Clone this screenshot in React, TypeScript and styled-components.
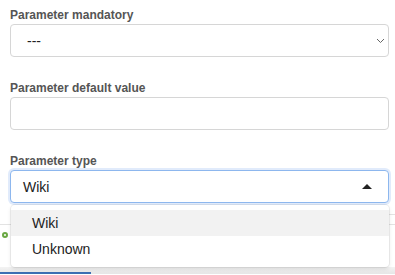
import React from "react";
import styled, { createGlobalStyle } from "styled-components";

const Global = createGlobalStyle`
  html, body { margin: 0; padding: 0; background: #fff; overflow: hidden; }
  body { font-family: "Liberation Sans", Arial, sans-serif; width: 395px; height: 275px; }
`;

const Page = styled.div`
  width: 395px;
  height: 275px;
  display: flex;
  flex-direction: column;
`;

const Form = styled.div`
  padding: 8px 6px 0 10px;
  display: flex;
  flex-direction: column;
  gap: 24px;
`;

const Group = styled.div<{ $raised?: boolean }>`
  display: flex;
  flex-direction: column;
  position: relative;
  z-index: ${(p) => (p.$raised ? 2 : "auto")};
`;

const Label = styled.div`
  font-size: 12px;
  line-height: 14px;
  font-weight: bold;
  color: #555;
  margin-bottom: 2px;
`;

const Field = styled.div<{ $focused?: boolean; $pad?: number }>`
  box-sizing: border-box;
  height: 33px;
  border: 1px solid ${(p) => (p.$focused ? "#8db7ee" : "#d6d6d6")};
  border-radius: 4px;
  box-shadow: ${(p) => (p.$focused ? "0 0 0 2px rgba(120,165,235,0.22)" : "none")};
  display: flex;
  align-items: center;
  justify-content: space-between;
  padding: 0 ${(p) => (p.$focused ? 16 : 3)}px 0 ${(p) => p.$pad ?? 12}px;
  font-size: 14px;
  color: #222;
  background: #fff;
`;

const Value = styled.span`
  font-size: 14px;
  line-height: 16px;
  color: #222;
`;

const Menu = styled.div`
  position: absolute;
  top: 51px;
  left: 1px;
  right: 0;
  box-sizing: border-box;
  height: 62px;
  padding: 5px 0;
  background: #fff;
  border-radius: 4px;
  box-shadow: 0 0 0 1px rgba(0, 0, 0, 0.06), 0 2px 4px rgba(0, 0, 0, 0.1);
  display: flex;
  flex-direction: column;
`;

const Option = styled.div<{ $active?: boolean }>`
  height: 26px;
  display: flex;
  align-items: center;
  padding-left: 21px;
  font-size: 14px;
  color: #222;
  background: ${(p) => (p.$active ? "#f2f2f2" : "#fff")};
`;

const Backdrop = styled.div`
  display: flex;
  flex-direction: column;
  flex: 1;
`;

const RuleRow = styled.div`
  height: 12px;
  display: flex;
  justify-content: flex-end;
`;

const RightRule = styled.div`
  width: 40px;
  border-bottom: 1px solid #e3e3e3;
`;

const LeftRule = styled.div`
  margin-top: 9px;
  border-bottom: 1px solid #e3e3e3;
`;

const StatusRow = styled.div`
  margin-top: 7px;
  padding-left: 2px;
  display: flex;
`;

const Dot = styled.div`
  box-sizing: border-box;
  width: 6px;
  height: 6px;
  border-radius: 50%;
  border: 2px solid #6aa843;
`;

const BottomBand = styled.div`
  margin-top: 29px;
  height: 7px;
  box-sizing: border-box;
  padding-top: 5px;
  background: linear-gradient(#f3f3f3, #e6e6e6);
`;

const TabBar = styled.div`
  width: 91px;
  height: 2px;
  background: #3d6fb3;
`;

const Chevron = () => (
  <svg width="9" height="6" viewBox="0 0 9 6">
    <polyline points="1,1 4.5,4.5 8,1" fill="none" stroke="#666" strokeWidth="1" />
  </svg>
);

const Caret = () => (
  <svg width="10" height="5" viewBox="0 0 10 5">
    <polygon points="0,5 5,0 10,5" fill="#222" />
  </svg>
);

export default function App() {
  return (
    <>
      <Global />
      <Page>
        <Form>
          <Group>
            <Label>Parameter mandatory</Label>
            <Field $pad={16}>
              <Value>---</Value>
              <Chevron />
            </Field>
          </Group>
          <Group>
            <Label>Parameter default value</Label>
            <Field />
          </Group>
          <Group $raised>
            <Label>Parameter type</Label>
            <Field $focused>
              <Value>Wiki</Value>
              <Caret />
            </Field>
            <Menu>
              <Option $active>Wiki</Option>
              <Option>Unknown</Option>
            </Menu>
          </Group>
        </Form>
        <Backdrop>
          <RuleRow>
            <RightRule />
          </RuleRow>
          <LeftRule />
          <StatusRow>
            <Dot />
          </StatusRow>
          <BottomBand>
            <TabBar />
          </BottomBand>
        </Backdrop>
      </Page>
    </>
  );
}
